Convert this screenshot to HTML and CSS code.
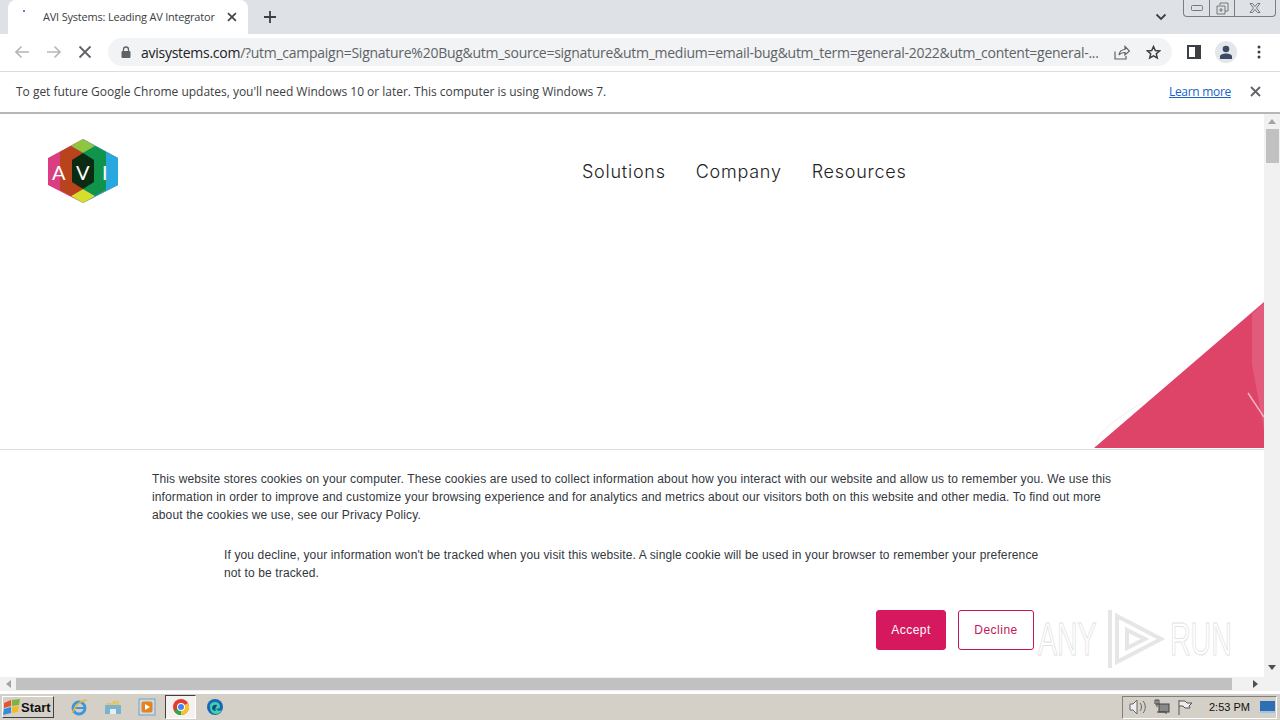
FILE: index.html
```html
<!DOCTYPE html>
<html>

<head>
    <title>AVI Systems: Leading AV Integrator</title>
    <meta charset="utf-8">
    <link rel="stylesheet" href="styles.css">
</head>

<body>

    <div class="tabstrip">
        <div class="tab">
            <span class="spinner"></span>
            <span class="tab_title">AVI Systems: Leading AV Integrator</span>
            <svg class="tab_close" width="10" height="10" viewBox="0 0 10 10"><path d="M1 1l8 8M9 1l-8 8" stroke="#444" stroke-width="1.7"/></svg>
        </div>
        <svg class="new_tab" width="14" height="14" viewBox="0 0 14 14"><path d="M7 1v12M1 7h12" stroke="#3c4043" stroke-width="1.8"/></svg>
        <svg class="tab_list" width="12" height="8" viewBox="0 0 12 8"><path d="M1.5 1.5L6 6l4.5-4.5" fill="none" stroke="#3c4043" stroke-width="1.8"/></svg>
        <div class="window_btns">
            <span class="win_btn min"><svg width="12" height="6" viewBox="0 0 12 6"><rect x=".5" y=".5" width="11" height="5" rx="1" fill="none" stroke="#777"/></svg></span>
            <span class="win_btn max"><svg width="13" height="13" viewBox="0 0 13 13"><path d="M4 3V1h8v8h-3M1 4h8v8H1zM4 7h2v2H4z" fill="none" stroke="#777"/></svg></span>
            <span class="win_btn close"><svg width="14" height="10" viewBox="0 0 14 10"><path d="M2 .5h2.500L7 3.500 9.500.5H12L8.500 5 12 9.500H9.500L7 6.500 4.500 9.500H2L5.500 5z" fill="none" stroke="#777"/></svg></span>
        </div>
    </div>

    <div class="toolbar">
        <svg class="nav_icon" width="16" height="14" viewBox="0 0 16 14"><path d="M15 7H2M7.500 1.500L2 7l5.500 5.500" fill="none" stroke="#b4b7bb" stroke-width="1.7"/></svg>
        <svg class="nav_icon" width="16" height="14" viewBox="0 0 16 14"><path d="M1 7h13M8.500 1.500L14 7l-5.500 5.500" fill="none" stroke="#b4b7bb" stroke-width="1.700"/></svg>
        <svg class="nav_icon" width="14" height="14" viewBox="0 0 14 14"><path d="M1.500 1.500l11 11M12.500 1.500l-11 11" stroke="#5f6368" stroke-width="1.800"/></svg>
        <div class="omnibox">
            <svg class="lock" width="10" height="12" viewBox="0 0 10 12"><path d="M2.500 5V3.500a2.500 2.500 0 0 1 5 0V5" fill="none" stroke="#5f6368" stroke-width="1.300"/><rect x="0.500" y="5" width="9" height="7" rx="1" fill="#5f6368"/></svg>
            <span class="url"><b>avisystems.com</b>/?utm_campaign=Signature%20Bug&amp;utm_source=signature&amp;utm_medium=email-bug&amp;utm_term=general-2022&amp;utm_content=general-...</span>
            <svg class="omni_icon" width="16" height="15" viewBox="0 0 16 15"><path d="M1 6.500V14h11v-3M5 10c.5-3.500 3-5.500 6-5.500V1.500L15.500 6 11 10V7.500C8.500 7.500 6.500 8 5 10z" fill="none" stroke="#5f6368" stroke-width="1.200"/></svg>
            <svg class="omni_icon" width="15" height="15" viewBox="0 0 15 15"><path d="M7.500 1.500l1.800 4 4.300.4-3.300 2.900 1 4.200-3.800-2.200-3.800 2.200 1-4.200L1.400 5.900l4.300-.4z" fill="none" stroke="#3c4043" stroke-width="1.500"/></svg>
        </div>
        <svg class="side_icon" width="14" height="14" viewBox="0 0 14 14"><rect x="1" y="1" width="12" height="12" fill="none" stroke="#3c4043" stroke-width="2"/><rect x="8" y="1" width="5" height="12" fill="#3c4043"/></svg>
        <span class="avatar"><svg width="14" height="14" viewBox="0 0 14 14"><circle cx="7" cy="4" r="3.300" fill="#3c4a63"/><path d="M1 14v-2.500C1 9.500 4 8.500 7 8.500s6 1 6 3V14z" fill="#3c4a63"/></svg></span>
        <svg class="dots" width="4" height="14" viewBox="0 0 4 14"><circle cx="2" cy="2" r="1.500" fill="#3c4043"/><circle cx="2" cy="7" r="1.500" fill="#3c4043"/><circle cx="2" cy="12" r="1.500" fill="#3c4043"/></svg>
    </div>

    <div class="infobar">
        <p class="info_text">To get future Google Chrome updates, you'll need Windows 10 or later. This computer is using Windows 7.</p>
        <a class="learn" href="#">Learn more</a>
        <svg class="info_close" width="11" height="11" viewBox="0 0 11 11"><path d="M1 1l9 9M10 1l-9 9" stroke="#5f6368" stroke-width="1.800"/></svg>
    </div>

    <div class="viewport">
        <div class="page">
            <header class="site_header">
                <svg class="logo" width="70" height="64" viewBox="0 0 70 64">
                    <path d="M35 0L70 19v27L35 64 0 46V19z" fill="#db3d82"/>
                    <path d="M35 0L70 19v27L35 64z" fill="#29a8e0"/>
                    <path d="M35 0L47 7 35 14 23 7z" fill="#8fc63f"/>
                    <path d="M35 64L47 57 35 50 23 57z" fill="#d6dd2b"/>
                    <path d="M23 7L35 14V50L23 57 12 51V13z" fill="#b8431c"/>
                    <path d="M47 7L35 14V50L47 57 58 51V13z" fill="#10934a"/>
                    <path d="M35 14L46 21V43L35 50 24 43V21z" fill="#0b2b12"/>
                    <text class="logo_text" x="4" y="41">A</text>
                    <text class="logo_text" x="28" y="41">V</text>
                    <text class="logo_text" x="54" y="41">I</text>
                </svg>
                <nav class="site_nav">
                    <a href="#">Solutions</a>
                    <a href="#">Company</a>
                    <a href="#">Resources</a>
                </nav>
            </header>

            <svg class="triangle" width="170" height="147" viewBox="0 0 170 147">
                <path d="M1 145C3 135 8 125 49 100" fill="none" stroke="#f0f0f0"/>
                <path d="M170 0V146H0z" fill="#de4468"/>
                <path d="M170 1V128L158 62V12z" fill="#e25a7c"/>
                <path d="M154 91l16 24" stroke="#f3b4c4" stroke-width="1.500"/>
            </svg>

            <section class="cookie_banner">
                <p class="cookie_main">This website stores cookies on your computer. These cookies are used to collect information about how you interact with our website and allow us to remember you. We use this information in order to improve and customize your browsing experience and for analytics and metrics about our visitors both on this website and other media. To find out more about the cookies we use, see our Privacy Policy.</p>
                <p class="cookie_second">If you decline, your information won't be tracked when you visit this website. A single cookie will be used in your browser to remember your preference not to be tracked.</p>
                <div class="cookie_btns">
                    <button class="btn accept">Accept</button>
                    <button class="btn decline">Decline</button>
                </div>
            </section>

            <div class="watermark">
                <span>ANY</span>
                <svg width="60" height="62" viewBox="0 0 60 62"><path d="M5 2v58M12 8L56 31 12 54zM22 22L40 31 22 40z" fill="none" stroke="#e6e6e6" stroke-width="4"/></svg>
                <span>RUN</span>
            </div>
        </div>

        <div class="vscroll">
            <span class="arrow up"></span>
            <span class="vthumb"></span>
            <span class="arrow down"></span>
        </div>
    </div>

    <div class="hscroll">
        <span class="arrow left"></span>
        <span class="hthumb"></span>
        <span class="arrow right"></span>
        <span class="corner"></span>
    </div>

    <footer class="taskbar">
        <button class="start">
            <svg width="18" height="16" viewBox="0 0 18 16"><path d="M1 4l7-3v6l-7 2z" fill="#e8542a"/><path d="M9 1l8-1-1 6-7 1z" fill="#7cb342"/><path d="M1 10l7-2v6l-8 2z" fill="#2f8fdc"/><path d="M9 8l7-1-1 6-6 1z" fill="#f6b91e"/></svg>
            Start
        </button>
        <span class="task_icon"><svg width="18" height="18" viewBox="0 0 18 18"><circle cx="9" cy="10" r="6" fill="none" stroke="#3f97d8" stroke-width="3"/><path d="M4 10h10" stroke="#3f97d8" stroke-width="2"/><path d="M2 15C5 8 11 2 17 2" fill="none" stroke="#e9b93a" stroke-width="1.500"/></svg></span>
        <span class="task_icon"><svg width="18" height="18" viewBox="0 0 18 18"><path d="M2 5h6l1-2h6v4H2z" fill="#e3c56a"/><path d="M1 7h16v9H1z" fill="#78b4d0"/><path d="M6 11h6v5H6z" fill="#e8eef0"/></svg></span>
        <span class="task_icon"><svg width="18" height="18" viewBox="0 0 18 18"><rect x="1" y="1" width="16" height="16" fill="#c9dcea" stroke="#7aa0bd"/><rect x="3.500" y="3.500" width="11" height="11" rx="2" fill="#e8801c"/><path d="M7 6l5 3-5 3z" fill="#fff"/></svg></span>
        <span class="task_icon active"><svg width="18" height="18" viewBox="0 0 18 18"><circle cx="9" cy="9" r="8" fill="#e33b2e"/><path d="M9 9L2 13a8 8 0 0 0 7 4z" fill="#2da94f"/><path d="M9 9v8a8 8 0 0 0 7-12z" fill="#fbc02d"/><circle cx="9" cy="9" r="4" fill="#fff"/><circle cx="9" cy="9" r="3" fill="#4285f4"/></svg></span>
        <span class="task_icon"><svg width="18" height="18" viewBox="0 0 18 18"><circle cx="9" cy="9" r="8" fill="#1668b8"/><path d="M4 7c2-4 9-4 10 1 .5 2-2 3-4 2.500 1 2.500 4 3 6 1.500-2 5-9 5-11 1-1-2-1-4-1-6z" fill="#43d3a0"/><path d="M6 10c0-3 3-4 5-3 0 2-3 3-1 6-2 0-4-1-4-3z" fill="#0e4a8f"/></svg></span>
        <div class="tray">
            <svg width="18" height="16" viewBox="0 0 18 16"><path d="M1 5h3l4-4v14l-4-4H1z" fill="#eee" stroke="#666"/><path d="M11 4c2 2 2 6 0 8M14 2c3 3 3 9 0 12" fill="none" stroke="#666"/></svg>
            <svg width="16" height="16" viewBox="0 0 16 16"><rect x="5" y="5" width="10" height="8" fill="#888" stroke="#444"/><path d="M3 1v7M1 1h4v4H1zM3 13h9v2" fill="none" stroke="#444"/></svg>
            <svg width="16" height="16" viewBox="0 0 16 16"><path d="M2 1v15M2 2h6l2 2h5l-3 3 1 2H8L6 7H2" fill="#eee" stroke="#555"/></svg>
            <span class="clock">2:53 PM</span>
            <span class="show_desktop"></span>
        </div>
    </footer>

</body>

</html>
```

FILE: styles.css
```css
* {
    box-sizing: border-box;
}

html,
body {
    margin: 0;
    padding: 0;
    height: 720px;
    overflow: hidden;
    background-color: #ffffff;
    font-family: "Open Sans", sans-serif;
}

p {
    margin: 0;
}

/* browser chrome */
.tabstrip {
    height: 34px;
    background-color: #dee1e6;
    display: flex;
    align-items: center;
    padding-left: 8px;
}

.tab {
    width: 240px;
    height: 34px;
    background-color: #ffffff;
    border-radius: 8px 8px 0 0;
    display: flex;
    align-items: center;
    padding: 0 11px 0 15px;
}

.spinner {
    width: 2px;
    height: 2px;
    border-radius: 50%;
    background-color: #2a55c0;
    margin-bottom: 13px;
}

.tab_title {
    font-size: 11px;
    color: #3c4043;
    margin-left: 18px;
    margin-bottom: 2px;
    width: 174px;
    white-space: nowrap;
    overflow: hidden;
    letter-spacing: -0.2px;
}

.tab_close {
    margin-left: 12px;
}

.new_tab {
    margin-left: 15px;
}

.tab_list {
    margin-left: auto;
    margin-right: 16px;
}

.window_btns {
    align-self: flex-start;
    width: 93px;
    height: 17px;
    margin-right: 4px;
    display: flex;
    border: 1px solid #7a7d82;
    border-top: none;
    border-radius: 0 0 4px 4px;
}

.win_btn {
    display: flex;
    align-items: center;
    justify-content: center;
    border-left: 1px solid #7a7d82;
}

.min {
    width: 25px;
    border-left: none;
}

.max {
    width: 25px;
}

.close {
    flex: 1;
}

.toolbar {
    height: 38px;
    background-color: #ffffff;
    border-bottom: 1px solid #dadce0;
    display: flex;
    align-items: center;
    padding-left: 14px;
    padding-bottom: 1px;
}

.nav_icon {
    margin-right: 16px;
}

.omnibox {
    width: 1064px;
    height: 28px;
    margin-left: 0;
    background-color: #f1f3f4;
    border-radius: 14px;
    display: flex;
    align-items: center;
    padding-left: 13px;
}

.lock {
    flex: none;
}

.url {
    margin-left: 10px;
    width: 957px;
    flex: none;
    font-size: 14px;
    color: #5f6368;
    white-space: nowrap;
    overflow: hidden;
    letter-spacing: -0.27px;
}

.url b {
    font-weight: 400;
    color: #202124;
}

.omni_icon {
    margin-left: 16px;
    flex: none;
}

.side_icon {
    margin-left: 15px;
}

.avatar {
    width: 22px;
    height: 22px;
    border-radius: 50%;
    background-color: #e3e6ea;
    margin-left: 14px;
    display: flex;
    align-items: center;
    justify-content: center;
    overflow: hidden;
}

.dots {
    margin-left: 20px;
}

.infobar {
    height: 42px;
    background-color: #ffffff;
    border-bottom: 2px solid #b4b6b8;
    display: flex;
    align-items: center;
    padding: 0 19px 1px 16px;
}

.info_text {
    font-size: 12px;
    color: #3c4043;
    letter-spacing: -0.02px;
}

.learn {
    font-size: 12px;
    color: #1a62c4;
    margin-left: auto;
    letter-spacing: -0.3px;
}

.info_close {
    margin-left: 19px;
}

/* page area */
.viewport {
    height: 563px;
    display: flex;
}

.page {
    position: relative;
    width: 1264px;
    overflow: hidden;
    background-color: #ffffff;
}

.site_header {
    display: flex;
    align-items: center;
    padding: 25px 0 0 48px;
}

.logo_text {
    font-family: "Lato", sans-serif;
    font-size: 20px;
    fill: #ffffff;
}

.site_nav {
    display: flex;
    gap: 30px;
    margin-left: 464px;
}

.site_nav a {
    font-family: "Inter", sans-serif;
    font-weight: 300;
    font-size: 18px;
    letter-spacing: 0.75px;
    color: #222222;
    text-decoration: none;
}

.triangle {
    position: absolute;
    right: 0;
    top: 188px;
    overflow: visible;
}

.cookie_banner {
    position: absolute;
    left: 0;
    right: 0;
    bottom: 0;
    height: 228px;
    background-color: #ffffff;
    border-top: 1px solid #dddddd;
    padding: 20px 152px 0;
    font-family: "Liberation Sans", Arial, sans-serif;
    font-size: 12px;
    line-height: 18px;
    letter-spacing: 0.13px;
    color: #33373d;
}

.cookie_second {
    margin: 22px 72px 0 72px;
}

.cookie_btns {
    display: flex;
    justify-content: flex-end;
    gap: 12px;
    margin: 28px 78px 0 0;
}

.btn {
    height: 40px;
    border-radius: 3px;
    font-family: "Liberation Sans", Arial, sans-serif;
    font-size: 12px;
    letter-spacing: 0.5px;
}

.accept {
    width: 70px;
    background-color: #d6195f;
    border: 1px solid #d6195f;
    color: #ffffff;
}

.decline {
    width: 76px;
    background-color: #ffffff;
    border: 1px solid #c2185b;
    color: #c2185b;
}

.watermark {
    position: absolute;
    left: 1038px;
    top: 494px;
    display: flex;
    align-items: center;
    gap: 5px;
}

.watermark span {
    display: block;
    width: 62px;
    font-family: "Liberation Sans", Arial, sans-serif;
    font-size: 46px;
    color: #ffffff;
    -webkit-text-stroke: 1px #e2e2e2;
    white-space: nowrap;
    transform: scaleX(0.62);
    transform-origin: left center;
}

/* scrollbars */
.vscroll {
    width: 16px;
    background-color: #f1f1f1;
    position: relative;
    display: flex;
    flex-direction: column;
    align-items: center;
    padding-top: 5px;
}

.vthumb {
    width: 13px;
    height: 34px;
    background-color: #c1c1c1;
    margin-top: 5px;
}

.down {
    margin-top: auto;
    margin-bottom: 7px;
}

.arrow {
    width: 0;
    height: 0;
    border-style: solid;
    border-color: transparent;
    flex: none;
}

.up {
    border-width: 0 4px 5px;
    border-bottom-color: #a3a3a3;
}

.down {
    border-width: 5px 4px 0;
    border-top-color: #505050;
}

.left {
    border-width: 4px 5px 4px 0;
    border-right-color: #a3a3a3;
}

.right {
    border-width: 4px 0 4px 5px;
    border-left-color: #505050;
}

.hscroll {
    height: 16px;
    background-color: #f1f1f1;
    border-bottom: 2px solid #ffffff;
    display: flex;
    align-items: center;
    padding-left: 6px;
}

.hthumb {
    width: 1216px;
    height: 12px;
    margin-left: 5px;
    background-color: #c1c1c1;
}

.right {
    margin-left: 21px;
}

.corner {
    width: 16px;
}

/* windows taskbar */
.taskbar {
    height: 27px;
    background-color: #d4d0c8;
    border-top: 1px solid #ffffff;
    display: flex;
    align-items: center;
    padding-left: 2px;
}

.start {
    width: 52px;
    height: 22px;
    background-color: #d4d0c8;
    border: 1px solid;
    border-color: #ffffff #404040 #404040 #ffffff;
    padding: 0;
    display: flex;
    align-items: center;
    gap: 0;
    font-family: "Liberation Sans", Arial, sans-serif;
    font-weight: 700;
    font-size: 13px;
    color: #111111;
    margin-right: 9px;
}

.task_icon {
    width: 31px;
    height: 24px;
    margin-right: 3px;
    display: flex;
    align-items: center;
    justify-content: center;
}

.active {
    background-color: #f4f2ee;
    border: 1px solid;
    border-color: #404040 #ffffff #ffffff #404040;
}

.tray {
    margin-left: auto;
    margin-right: 3px;
    width: 155px;
    height: 23px;
    border: 1px solid;
    border-color: #808080 #ffffff #ffffff #808080;
    display: flex;
    align-items: center;
    gap: 7px;
    padding-left: 6px;
}

.clock {
    font-family: "Liberation Sans", Arial, sans-serif;
    font-size: 11px;
    color: #111111;
    margin-left: 9px;
    width: 39px;
    white-space: nowrap;
}

.show_desktop {
    width: 15px;
    height: 12px;
    margin-left: 5px;
    background-color: #2c6fb5;
    border-bottom: 2px solid #9cc4e4;
}
```
